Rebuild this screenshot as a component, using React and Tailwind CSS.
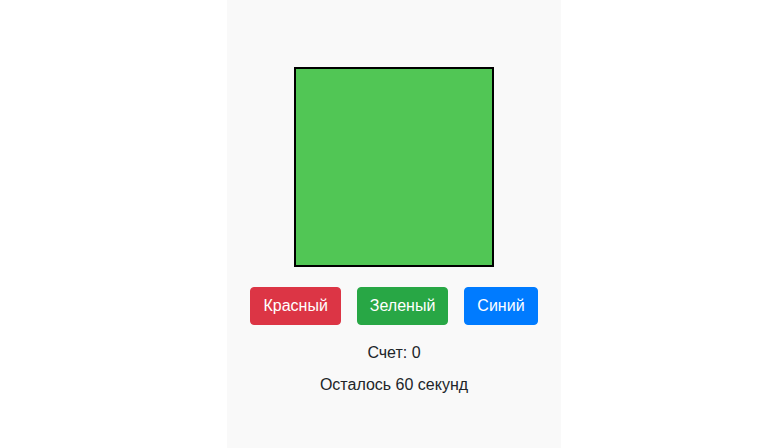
export default function App() {
  return (
    <div className="min-h-[448px] bg-white font-['Liberation_Sans',Arial,sans-serif] text-[#212529]">
      <div className="ml-[227px] flex min-h-[448px] w-[334px] flex-col items-center bg-[#f9f9f9] pt-[67px]">
        <div className="h-[200px] w-[200px] border-2 border-black bg-[#51c655]" />
        <div className="mt-5 flex gap-4">
          <button className="rounded border border-[#dc3545] bg-[#dc3545] px-3 py-1.5 text-base leading-6 text-white">
            Красный
          </button>
          <button className="rounded border border-[#28a745] bg-[#28a745] px-3 py-1.5 text-base leading-6 text-white">
            Зеленый
          </button>
          <button className="rounded border border-[#007bff] bg-[#007bff] px-3 py-1.5 text-base leading-6 text-white">
            Синий
          </button>
        </div>
        <p className="mt-4 text-base leading-6">Счет: 0</p>
        <p className="mt-2 text-base leading-6">Осталось 60 секунд</p>
      </div>
    </div>
  )
}
